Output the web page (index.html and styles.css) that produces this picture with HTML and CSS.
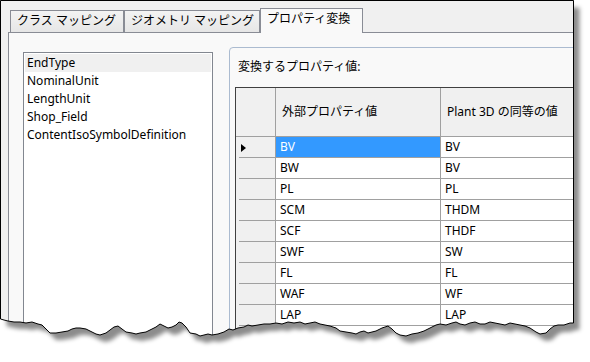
FILE: index.html
```html
<!DOCTYPE html>
<html lang="ja">

<head>
    <meta charset="UTF-8">
    <title>プロパティ変換</title>
    <link rel="stylesheet" href="styles.css">
</head>

<body>
    <div class="window">
        <div class="tabs">
            <div class="tab tab-class">クラス マッピング</div>
            <div class="tab tab-geom">ジオメトリ マッピング</div>
            <div class="tab active">プロパティ変換</div>
        </div>

        <div class="panel">
            <div class="list">
                <div class="list-item selected">EndType</div>
                <div class="list-item">NominalUnit</div>
                <div class="list-item">LengthUnit</div>
                <div class="list-item">Shop_Field</div>
                <div class="list-item">ContentIsoSymbolDefinition</div>
            </div>

            <div class="group">
                <div class="group-label">変換するプロパティ値:</div>
                <div class="grid">
                    <div class="cell corner"></div>
                    <div class="cell head">外部プロパティ値</div>
                    <div class="cell head">Plant 3D の同等の値</div>

                    <div class="cell row-head"><span class="arrow"></span></div>
                    <div class="cell selected">BV</div>
                    <div class="cell">BV</div>

                    <div class="cell row-head"></div>
                    <div class="cell">BW</div>
                    <div class="cell">BV</div>

                    <div class="cell row-head"></div>
                    <div class="cell">PL</div>
                    <div class="cell">PL</div>

                    <div class="cell row-head"></div>
                    <div class="cell">SCM</div>
                    <div class="cell">THDM</div>

                    <div class="cell row-head"></div>
                    <div class="cell">SCF</div>
                    <div class="cell">THDF</div>

                    <div class="cell row-head"></div>
                    <div class="cell">SWF</div>
                    <div class="cell">SW</div>

                    <div class="cell row-head"></div>
                    <div class="cell">FL</div>
                    <div class="cell">FL</div>

                    <div class="cell row-head"></div>
                    <div class="cell">WAF</div>
                    <div class="cell">WF</div>

                    <div class="cell row-head"></div>
                    <div class="cell">LAP</div>
                    <div class="cell">LAP</div>

                    <div class="cell row-head"></div>
                    <div class="cell"></div>
                    <div class="cell"></div>
                </div>
            </div>
        </div>
    </div>

    <!-- torn bottom edge and drop shadow of the screenshot -->
    <svg class="torn" width="590" height="362" viewBox="0 0 590 362">
        <defs>
            <polygon id="paper" points="0.5,0.5 573.5,0.5 573.5,323 570,323 564,325 558,325 554,326 550,329 546,333 540,334 536,332 530,328 525,326 520,325 515,324 510,323 505,325 500,324 495,323 490,322 485,324 480,324 475,322 470,323 465,325 460,324 456,322 452,323 446,325 440,324 436,325 430,328 424,331 418,333 412,334 406,336 400,335 396,333 392,329 388,326 385,327 382,328 376,331 372,332 368,333 364,331 360,332 356,334 352,333 346,332 340,331 336,328 330,326 325,325 320,324 315,322 310,323 305,324 300,322 294,323 288,322 282,324 276,323 270,324 264,324 258,325 252,326 248,325 244,327 238,328 233,330 229,329 224,332 218,334 212,335 208,334 204,335 200,336 196,334 190,333 186,327 182,323 179,322 176,325 172,327 168,328 164,326 160,324 156,327 152,329 146,332 140,333 136,334 132,333 126,332 122,329 118,326 114,327 110,330 106,333 100,335 96,334 90,331 86,329 80,328 76,328 72,329 68,331 62,332 56,333 50,333 46,329 42,325 38,324 32,322 26,323 20,322 14,322 8,321 4,320 0.5,319" />
            <mask id="outside">
                <rect width="590" height="362" fill="#fff" />
                <use href="#paper" fill="#000" />
            </mask>
            <filter id="blur" x="-5%" y="-5%" width="110%" height="115%">
                <feGaussianBlur stdDeviation="2" />
            </filter>
        </defs>
        <g mask="url(#outside)">
            <rect width="590" height="362" fill="#fff" />
            <use href="#paper" transform="translate(6 7)" fill="#000" fill-opacity="0.45" filter="url(#blur)" />
        </g>
        <use href="#paper" fill="none" stroke="#000" stroke-width="1" />
    </svg>
</body>

</html>
```

FILE: styles.css
```css
html,
body {
    margin: 0;
    overflow: hidden;
}

body {
    position: relative;
    width: 590px;
    height: 362px;
    background-color: #fff;
    font-family: "Noto Sans", "Noto Sans CJK JP", sans-serif;
    font-size: 12px;
    color: #000;
}

.window {
    box-sizing: border-box;
    width: 574px;
    height: 362px;
    border: 1px solid #000;
    background-color: #f0f0f0;
    overflow: hidden;
    display: flex;
    flex-direction: column;
}

.tabs {
    display: flex;
    align-items: flex-end;
    margin-left: 9px;
    padding-top: 7px;
}

.tab {
    box-sizing: border-box;
    height: 22px;
    border: 1px solid #898c95;
    border-bottom: none;
    background: linear-gradient(#f3f3f3, #e6e6e6);
    padding: 2px 0 0 6px;
    line-height: 16px;
    white-space: nowrap;
}

.tab-class {
    width: 114px;
}

.tab-geom {
    width: 136px;
}

.tab.active {
    position: relative;
    z-index: 1;
    width: 103px;
    height: 25px;
    margin-bottom: -1px;
    background: #f9f9f9;
}

.panel {
    flex: 1;
    margin-left: 7px;
    border-top: 1px solid #898c95;
    border-left: 1px solid #898c95;
    background-color: #f9f9f9;
    display: flex;
    align-items: flex-start;
    padding-left: 14px;
}

.list {
    box-sizing: border-box;
    flex: none;
    width: 190px;
    height: 320px;
    margin-top: 19px;
    border: 1px solid #828790;
    background-color: #fff;
    padding: 1px;
}

.list-item {
    line-height: 18px;
    padding-left: 2px;
    white-space: nowrap;
}

.list-item.selected {
    background-color: #f0f0f0;
}

.group {
    box-sizing: border-box;
    flex: none;
    width: 420px;
    height: 320px;
    margin: 14px 0 0 16px;
    border: 1px solid #abbbd0;
    border-radius: 4px;
    padding: 11px 0 0 4px;
}

.group-label {
    line-height: 16px;
    padding-left: 4px;
}

.grid {
    display: grid;
    grid-template-columns: 40px 165px 210px;
    grid-template-rows: 49px;
    grid-auto-rows: 21px;
    margin: 12px 0 0 1px;
    border: 1px solid #404040;
    border-right: none;
    background-color: #fff;
}

.cell {
    box-sizing: border-box;
    display: flex;
    align-items: center;
    padding-left: 4px;
    border-right: 1px solid #a0a0a0;
    border-bottom: 1px solid #a0a0a0;
    line-height: 16px;
    white-space: nowrap;
}

.corner,
.head {
    background-color: #f0f0f0;
}

.head {
    padding-left: 6px;
}

.row-head {
    border-bottom: none;
    padding-left: 5px;
    background: linear-gradient(#a0a0a0, #a0a0a0) right bottom / 36px 1px no-repeat, #f0f0f0;
}

.cell.selected {
    background-color: #3399ff;
    color: #fff;
}

.arrow {
    width: 0;
    height: 0;
    border-left: 5px solid #000;
    border-top: 4.5px solid transparent;
    border-bottom: 4.5px solid transparent;
}

.torn {
    position: absolute;
    left: 0;
    top: 0;
    pointer-events: none;
}
```
